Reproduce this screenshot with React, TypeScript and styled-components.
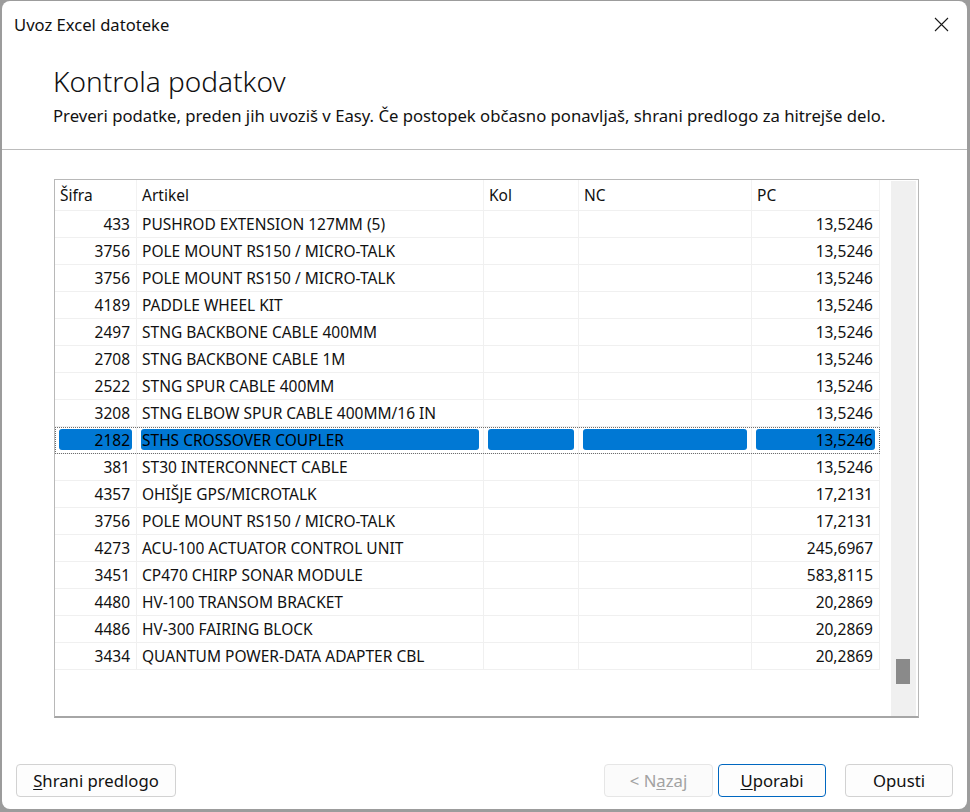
import React from "react";
import styled, { createGlobalStyle } from "styled-components";

const Global = createGlobalStyle`
  html, body { margin: 0; padding: 0; background: #9c9c9c; }
  #root { height: 100vh; }
  * { box-sizing: border-box; }
`;

const FONT = `"Noto Sans", "Open Sans", sans-serif`;

const Screen = styled.div`
  height: 100vh;
  padding: 1px 3px 3px 2px;
  font-family: ${FONT};
  color: #111;
`;

const Window = styled.div`
  height: 100%;
  background: #ffffff;
  border-radius: 8px;
  display: flex;
  flex-direction: column;
  overflow: hidden;
`;

const TitleBar = styled.div`
  height: 47px;
  flex: none;
  display: flex;
  align-items: center;
  justify-content: space-between;
  padding: 0 18px 0 12px;
`;

const TitleText = styled.div`
  font-size: 16.6px;
  color: #111;
`;

const CloseButton = styled.div`
  width: 16px;
  height: 16px;
  display: flex;
  align-items: center;
  justify-content: center;
`;

const Header = styled.div`
  flex: none;
  padding: 16px 51px 22px 51px;
  border-bottom: 1px solid #bcbcbc;
`;

const Heading = styled.div`
  font-size: 28px;
  font-weight: 300;
  line-height: 34px;
  color: #111;
`;

const Subtitle = styled.div`
  margin-top: 7px;
  font-size: 16.7px;
  line-height: 22px;
  color: #111;
`;

const Body = styled.div`
  flex: none;
  padding: 29px 48px 0 52px;
`;

const GridBox = styled.div`
  height: 539px;
  border: 1px solid #b8b8b8;
  border-bottom: 2px solid #a6a6a6;
  display: flex;
  background: #fff;
`;

const Table = styled.div`
  width: 825px;
  flex: none;
  display: flex;
  flex-direction: column;
`;

const COLS = "82px 347px 95px 173px 128px";

const HeaderRow = styled.div`
  display: grid;
  grid-template-columns: ${COLS};
  height: 31px;
  border-bottom: 1px solid #f0f0f0;
`;

const HeaderCell = styled.div`
  display: flex;
  align-items: center;
  padding: 0 5px;
  font-size: 15.5px;
  color: #111;
  border-right: 1px solid #f2f2f2;
`;

const Row = styled.div<{ $selected?: boolean }>`
  display: grid;
  grid-template-columns: ${COLS};
  height: 27px;
  border-bottom: 1px solid #f0f0f0;
  outline: ${(p) => (p.$selected ? "1px dotted #6e6e6e" : "none")};
  outline-offset: -1px;
`;

const Cell = styled.div<{ $align?: "left" | "right"; $selected?: boolean }>`
  display: flex;
  align-items: ${(p) => (p.$selected ? "stretch" : "center")};
  justify-content: ${(p) => (p.$align === "right" ? "flex-end" : "flex-start")};
  padding: ${(p) =>
    p.$selected ? "2px 4px 3px 4px" : p.$align === "right" ? "0 6px 0 5px" : "0 5px"};
  border-right: 1px solid #f0f0f0;
  font-size: 15.5px;
  white-space: nowrap;
  overflow: hidden;
  color: #111;
`;

const Fill = styled.div<{ $align?: "left" | "right" }>`
  flex: 1;
  display: flex;
  align-items: center;
  justify-content: ${(p) => (p.$align === "right" ? "flex-end" : "flex-start")};
  background: #0078d4;
  border-radius: 3px;
  padding: ${(p) => (p.$align === "right" ? "0 2px 0 1px" : "0 1px")};
  color: #000;
`;

const Gap = styled.div`
  width: 11px;
  flex: none;
`;

const ScrollTrack = styled.div`
  width: 25px;
  flex: none;
  margin-top: 1px;
  background: #f0f0f0;
  display: flex;
  flex-direction: column;
  justify-content: flex-end;
  align-items: center;
  padding: 0 1px 32px 0;
`;

const Thumb = styled.div`
  width: 14px;
  height: 25px;
  background: #8a8a8a;
`;

const Footer = styled.div`
  flex: none;
  margin-top: 46px;
  padding: 0 14px;
  display: flex;
  align-items: center;
`;

const Spacer = styled.div`
  flex: 1;
`;

const Button = styled.button<{ $primary?: boolean; $width: number; $gapLeft?: number }>`
  width: ${(p) => p.$width}px;
  height: 33px;
  margin-left: ${(p) => p.$gapLeft ?? 0}px;
  border-radius: 4px;
  background: #fdfdfd;
  border: 1px solid ${(p) => (p.$primary ? "#0067c0" : "#d2d2d2")};
  font-family: ${FONT};
  font-size: 16.7px;
  color: #111;
  padding: 0;
  &:disabled {
    color: #a2a2a2;
    border-color: #e6e6e6;
    background: #fbfbfb;
  }
  u { text-underline-offset: 2px; }
`;

type Item = { code: string; name: string; pc: string; selected?: boolean };

const rows: Item[] = [
  { code: "433", name: "PUSHROD EXTENSION 127MM (5)", pc: "13,5246" },
  { code: "3756", name: "POLE MOUNT RS150 / MICRO-TALK", pc: "13,5246" },
  { code: "3756", name: "POLE MOUNT RS150 / MICRO-TALK", pc: "13,5246" },
  { code: "4189", name: "PADDLE WHEEL KIT", pc: "13,5246" },
  { code: "2497", name: "STNG BACKBONE CABLE 400MM", pc: "13,5246" },
  { code: "2708", name: "STNG BACKBONE CABLE 1M", pc: "13,5246" },
  { code: "2522", name: "STNG SPUR CABLE 400MM", pc: "13,5246" },
  { code: "3208", name: "STNG ELBOW SPUR CABLE 400MM/16 IN", pc: "13,5246" },
  { code: "2182", name: "STHS CROSSOVER COUPLER", pc: "13,5246", selected: true },
  { code: "381", name: "ST30 INTERCONNECT CABLE", pc: "13,5246" },
  { code: "4357", name: "OHIŠJE GPS/MICROTALK", pc: "17,2131" },
  { code: "3756", name: "POLE MOUNT RS150 / MICRO-TALK", pc: "17,2131" },
  { code: "4273", name: "ACU-100 ACTUATOR CONTROL UNIT", pc: "245,6967" },
  { code: "3451", name: "CP470 CHIRP SONAR MODULE", pc: "583,8115" },
  { code: "4480", name: "HV-100 TRANSOM BRACKET", pc: "20,2869" },
  { code: "4486", name: "HV-300 FAIRING BLOCK", pc: "20,2869" },
  { code: "3434", name: "QUANTUM POWER-DATA ADAPTER CBL", pc: "20,2869" },
];

function DataCell({
  value,
  align,
  selected,
}: {
  value: string;
  align?: "left" | "right";
  selected?: boolean;
}) {
  return (
    <Cell $align={align} $selected={selected}>
      {selected ? <Fill $align={align}>{value}</Fill> : value}
    </Cell>
  );
}

export default function App() {
  return (
    <>
      <Global />
      <Screen>
        <Window>
          <TitleBar>
            <TitleText>Uvoz Excel datoteke</TitleText>
            <CloseButton>
              <svg width="15" height="15" viewBox="0 0 15 15">
                <path d="M1 1 L14 14 M14 1 L1 14" stroke="#1a1a1a" strokeWidth="1.1" fill="none" />
              </svg>
            </CloseButton>
          </TitleBar>
          <Header>
            <Heading>Kontrola podatkov</Heading>
            <Subtitle>
              Preveri podatke, preden jih uvoziš v Easy. Če postopek občasno ponavljaš, shrani
              predlogo za hitrejše delo.
            </Subtitle>
          </Header>
          <Body>
            <GridBox>
              <Table>
                <HeaderRow>
                  <HeaderCell>Šifra</HeaderCell>
                  <HeaderCell>Artikel</HeaderCell>
                  <HeaderCell>Kol</HeaderCell>
                  <HeaderCell>NC</HeaderCell>
                  <HeaderCell>PC</HeaderCell>
                </HeaderRow>
                {rows.map((r, i) => (
                  <Row key={i} $selected={r.selected}>
                    <DataCell value={r.code} align="right" selected={r.selected} />
                    <DataCell value={r.name} selected={r.selected} />
                    <DataCell value="" selected={r.selected} />
                    <DataCell value="" selected={r.selected} />
                    <DataCell value={r.pc} align="right" selected={r.selected} />
                  </Row>
                ))}
              </Table>
              <Gap />
              <ScrollTrack>
                <Thumb />
              </ScrollTrack>
            </GridBox>
          </Body>
          <Footer>
            <Button $width={160}>
              <u>S</u>hrani predlogo
            </Button>
            <Spacer />
            <Button $width={109} disabled>
              &lt; N<u>a</u>zaj
            </Button>
            <Button $width={108} $gapLeft={5} $primary>
              <u>U</u>porabi
            </Button>
            <Button $width={108} $gapLeft={19}>
              Opusti
            </Button>
          </Footer>
        </Window>
      </Screen>
    </>
  );
}
